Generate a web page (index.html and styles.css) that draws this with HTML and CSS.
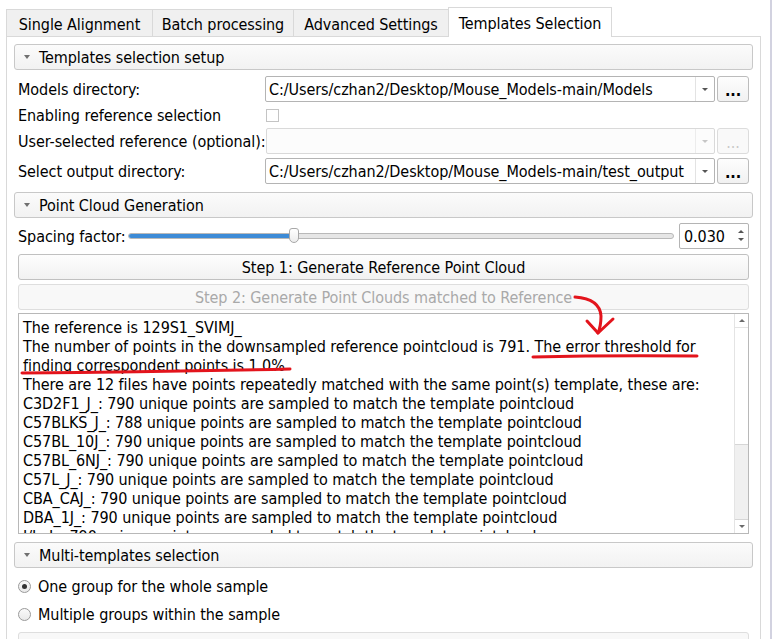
FILE: index.html
```html
<!DOCTYPE html>
<html>
<head>
<meta charset="utf-8">
<link rel="stylesheet" href="styles.css">
</head>
<body>
<div class="window">
  <div class="main">
    <div class="tabs">
      <div class="tab t1">Single Alignment</div>
      <div class="tab t2">Batch processing</div>
      <div class="tab t3">Advanced Settings</div>
      <div class="tab t4 active">Templates Selection</div>
    </div>
    <div class="panel">
      <div class="section-header"><span class="caret"></span>Templates selection setup</div>
      <div class="form">
        <div class="row">
          <div class="label">Models directory:</div>
          <div class="combo"><div class="combo-text">C:/Users/czhan2/Desktop/Mouse_Models-main/Models</div><div class="combo-arrow"><span class="tri-down"></span></div></div>
          <div class="dots">...</div>
        </div>
        <div class="row check-row">
          <div class="label">Enabling reference selection</div>
          <div class="checkbox"></div>
        </div>
        <div class="row">
          <div class="label">User-selected reference (optional):</div>
          <div class="combo disabled"><div class="combo-text"></div><div class="combo-arrow"><span class="tri-down"></span></div></div>
          <div class="dots disabled">...</div>
        </div>
        <div class="row">
          <div class="label">Select output directory:</div>
          <div class="combo"><div class="combo-text">C:/Users/czhan2/Desktop/Mouse_Models-main/test_output</div><div class="combo-arrow"><span class="tri-down"></span></div></div>
          <div class="dots">...</div>
        </div>
      </div>

      <div class="section-header sh2"><span class="caret"></span>Point Cloud Generation</div>
      <div class="slider-row">
        <div class="slider-label">Spacing factor:</div>
        <div class="slider">
          <div class="groove"><div class="fill"></div></div>
          <div class="handle"></div>
        </div>
        <div class="spin">
          <div class="spin-text">0.030</div>
          <div class="spin-arrows"><span class="tri-up"></span><span class="tri-down"></span></div>
        </div>
      </div>
      <div class="btn b1">Step 1: Generate Reference Point Cloud</div>
      <div class="btn b2 disabled">Step 2: Generate Point Clouds matched to Reference</div>
      <div class="textarea">
        <div class="text">
          <div class="line">The reference is 129S1_SVIMJ_</div>
          <div class="line">The number of points in the downsampled reference pointcloud is 791. The error threshold for</div>
          <div class="line">finding correspondent points is 1.0%</div>
          <div class="line">There are 12 files have points repeatedly matched with the same point(s) template, these are:</div>
          <div class="line">C3D2F1_J_: 790 unique points are sampled to match the template pointcloud</div>
          <div class="line">C57BLKS_J_: 788 unique points are sampled to match the template pointcloud</div>
          <div class="line">C57BL_10J_: 790 unique points are sampled to match the template pointcloud</div>
          <div class="line">C57BL_6NJ_: 790 unique points are sampled to match the template pointcloud</div>
          <div class="line">C57L_J_: 790 unique points are sampled to match the template pointcloud</div>
          <div class="line">CBA_CAJ_: 790 unique points are sampled to match the template pointcloud</div>
          <div class="line">DBA_1J_: 790 unique points are sampled to match the template pointcloud</div>
          <div class="line">I/LnJ_: 790 unique points are sampled to match the template pointcloud</div>
        </div>
        <div class="scrollbar">
          <div class="sb-btn sb-up"><span class="tri-up"></span></div>
          <div class="sb-track"></div>
          <div class="sb-thumb"></div>
          <div class="sb-btn sb-down"><span class="tri-down"></span></div>
        </div>
      </div>

      <div class="section-header sh3"><span class="caret"></span>Multi-templates selection</div>
      <div class="radio-row r1"><span class="radio checked"></span>One group for the whole sample</div>
      <div class="radio-row"><span class="radio"></span>Multiple groups within the sample</div>
      <div class="btn b3 disabled">Step 3: Select multiple templates</div>
    </div>
  </div>
  <div class="splitter"><div class="split-line"></div></div>
</div>
<svg class="annot" width="776" height="639" viewBox="0 0 776 639">
  <path d="M533 357 Q 610 355 697 356" />
  <path d="M22 373 Q 150 372 290 369" />
  <path d="M575 297 Q 600 299 601 316 Q 601 326 598 333" />
  <path d="M587 321 L 598 333 L 613 319" />
</svg>
</body>
</html>
```
FILE: styles.css
```css
* { box-sizing: border-box; }
html, body { margin: 0; padding: 0; background: #fff; }
body {
  width: 776px;
  height: 639px;
  overflow: hidden;
  position: relative;
  font-family: "DejaVu Sans", "Liberation Sans", sans-serif;
  font-stretch: condensed;
  font-size: 16px;
  letter-spacing: -0.07px;
  color: #000;
}
.window { display: flex; height: 639px; }
.main { width: 761px; flex: 0 0 761px; padding: 7px 0 0 6px; }

.tabs { display: flex; align-items: flex-start; height: 29px; }
.tab {
  height: 27px;
  margin-top: 2px;
  border: 1px solid #d9d9d9;
  border-bottom: none;
  background: #f0f0f0;
  display: flex;
  align-items: center;
  justify-content: center;
  padding-top: 2px;
  white-space: nowrap;
}
.t1 { width: 147px; }
.t2 { width: 142px; margin-left: -1px; }
.t3 { width: 156px; margin-left: -1px; }
.t4 { width: 164px; margin-left: -1px; }
.tab.active {
  height: 30px;
  margin-top: 0;
  background: #fff;
  position: relative;
  z-index: 1;
  padding-top: 1px;
}

.panel {
  height: 603px;
  border: 1px solid #d9d9d9;
  border-bottom: none;
  padding: 7px 7px 0 7px;
  background: #fff;
}

.section-header {
  height: 26px;
  border: 1px solid #c8c8c8;
  border-radius: 3px;
  background: linear-gradient(#fbfbfb, #f2f2f2);
  display: flex;
  align-items: center;
  white-space: nowrap;
}
.caret {
  width: 0; height: 0;
  border-left: 3px solid transparent;
  border-right: 3px solid transparent;
  border-top: 4px solid #707070;
  margin: 0 9px 0 9px;
}
.sh2 { margin-top: 8px; }
.sh3 { margin-top: 8px; }

.form { margin: 6px 4px 0; display: flex; flex-direction: column; gap: 4px; }
.row { display: flex; align-items: center; height: 26px; }
.check-row { height: 18px; align-items: center; }
.label { flex: 0 0 247px; white-space: nowrap; }
.combo {
  flex: 1;
  height: 26px;
  border: 1px solid #b4b4b4;
  border-radius: 2px;
  background: #fff;
  display: flex;
}
.combo-text { flex: 1; padding-left: 3px; display: flex; align-items: center; white-space: nowrap; overflow: hidden; }
.combo-arrow {
  width: 19px;
  border-left: 1px solid #e3e3e3;
  display: flex;
  align-items: center;
  justify-content: center;
}
.combo.disabled { border-color: #d9d9d9; background: #fcfcfc; }
.combo.disabled .combo-arrow { border-left-color: #ececec; }
.combo.disabled .tri-down { border-top-color: #c6c6c6; }
.tri-down {
  width: 0; height: 0;
  border-left: 3px solid transparent;
  border-right: 3px solid transparent;
  border-top: 3px solid #555;
}
.tri-up {
  width: 0; height: 0;
  border-left: 3px solid transparent;
  border-right: 3px solid transparent;
  border-bottom: 3px solid #555;
}
.dots {
  flex: 0 0 32px;
  margin-left: 2px;
  height: 26px;
  border: 1px solid #bcbcbc;
  border-radius: 3px;
  background: linear-gradient(#fdfdfd, #f1f1f1);
  display: flex;
  align-items: center;
  justify-content: center;
  padding-top: 3px;
  font-weight: bold;
}
.dots.disabled { color: #c8c8c8; border-color: #dcdcdc; background: #f9f9f9; font-weight: normal; }
.checkbox {
  width: 13px; height: 13px;
  border: 1px solid #c4c4c4;
  background: #fff;
  margin-left: 1px;
  margin-top: 1px;
}

.slider-row { display: flex; align-items: center; height: 26px; margin: 5px 4px 0; }
.slider-label { flex: 0 0 110px; white-space: nowrap; }
.slider { flex: 1; position: relative; height: 26px; display: flex; align-items: center; }
.groove {
  width: 100%;
  height: 6px;
  border: 1px solid #b9b9b9;
  border-radius: 3px;
  background: #e6e6e6;
  overflow: hidden;
  display: flex;
}
.fill { width: 163px; background: #3d8bd6; border-right: 1px solid #2a70b8; }
.handle {
  position: absolute;
  left: 161px;
  top: 5px;
  width: 10px;
  height: 15px;
  border: 1px solid #a8a8a8;
  border-radius: 3px 3px 5px 5px;
  background: linear-gradient(#ffffff, #ececec);
}
.spin {
  flex: 0 0 70px;
  margin-left: 5px;
  height: 26px;
  border: 1px solid #b4b4b4;
  border-radius: 2px;
  display: flex;
  background: #fff;
}
.spin-text { flex: 1; padding-left: 4px; display: flex; align-items: center; }
.spin-arrows { width: 14px; display: flex; flex-direction: column; align-items: center; justify-content: space-around; padding: 4px 0 5px; }

.btn {
  margin: 0 4px;
  height: 26px;
  border: 1px solid #c0c0c0;
  border-radius: 3px;
  background: linear-gradient(#fdfdfd, #f1f1f1);
  display: flex;
  align-items: center;
  justify-content: center;
  white-space: nowrap;
}
.b1 { margin-top: 5px; }
.b2 { margin-top: 4px; }
.btn.disabled { color: #a9a9a9; border-color: #dedede; background: #f8f8f8; }
.b3 { margin-top: 4px; }

.textarea {
  margin: 3px 4px 0;
  height: 221px;
  border: 1px solid #b8b8b8;
  background: #fff;
  display: flex;
}
.text { flex: 1; padding: 4px 0 0 4px; overflow: hidden; line-height: 19px; }
.line { white-space: nowrap; }
.scrollbar { width: 14px; border-left: 1px solid #e4e4e4; display: flex; flex-direction: column; }
.sb-btn { display: flex; align-items: center; justify-content: center; }
.sb-up { height: 14px; border-bottom: 1px solid #e4e4e4; }
.sb-track { height: 116px; }
.sb-thumb { height: 76px; background: #f0f0f0; border-top: 1px solid #d6d6d6; border-bottom: 1px solid #d6d6d6; }
.sb-down { height: 13px; }
.sb-btn .tri-up, .sb-btn .tri-down { border-top-color: #6a6a6a; border-bottom-color: #6a6a6a; }

.radio-row { height: 28px; display: flex; align-items: center; margin: 0 4px; white-space: nowrap; }
.r1 { margin-top: 4px; }
.radio {
  width: 13px; height: 13px;
  border: 1px solid #9a9a9a;
  border-radius: 50%;
  background: linear-gradient(#fafafa, #e9e9e9);
  margin-right: 7px;
  display: flex;
  align-items: center;
  justify-content: center;
}
.radio.checked::after {
  content: "";
  width: 5px; height: 5px;
  border-radius: 50%;
  background: #333;
}

.splitter { flex: 1; display: flex; padding-left: 9px; }
.split-line { width: 2px; background: #d2d2e0; }

.annot { position: absolute; left: 0; top: 0; pointer-events: none; }
.annot path { fill: none; stroke: #e3141c; stroke-width: 3; stroke-linecap: round; stroke-linejoin: round; }
```
